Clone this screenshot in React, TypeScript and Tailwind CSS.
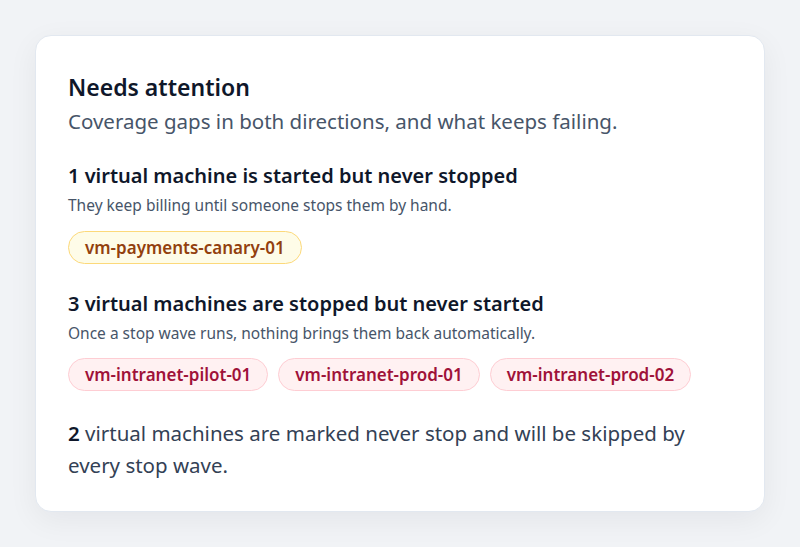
const started = ['vm-payments-canary-01']
const stopped = ['vm-intranet-pilot-01', 'vm-intranet-prod-01', 'vm-intranet-prod-02']

function Chip({ name, tone }: { name: string; tone: 'amber' | 'rose' }) {
  const cls =
    tone === 'amber'
      ? 'bg-[#fefce8] border-[#fcd97a] text-[#92400e]'
      : 'bg-[#fff1f2] border-[#fecdd3] text-[#9f1239]'
  return (
    <span className={`inline-flex items-center h-[33px] px-4 rounded-full border text-[17px] font-semibold ${cls}`}>
      {name}
    </span>
  )
}

export default function App() {
  return (
    <div
      className="min-h-[547px] bg-[#f1f3f6] p-[35px] text-[#0f172a]"
      style={{ fontFamily: '"Noto Sans", "Open Sans", sans-serif' }}
    >
      {/* Card */}
      <div className="bg-white rounded-2xl border border-[#e2e8f0] shadow-[0_8px_30px_rgba(15,23,42,0.06)] px-8 pt-[36px] pb-[30px]">
        <h2 className="text-[23px] font-semibold leading-[30px]">Needs attention</h2>
        <p className="text-[20.5px] text-[#475569] leading-[30px] mt-[4px]">
          Coverage gaps in both directions, and what keeps failing.
        </p>

        <section className="mt-[26px]">
          <h3 className="text-[20px] font-semibold leading-7">1 virtual machine is started but never stopped</h3>
          <p className="text-[15.5px] text-[#475569] leading-6 mt-[3px]">
            They keep billing until someone stops them by hand.
          </p>
          <div className="flex flex-wrap gap-[10px] mt-[14px]">
            {started.map((n) => (
              <Chip key={n} name={n} tone="amber" />
            ))}
          </div>
        </section>

        <section className="mt-[26px]">
          <h3 className="text-[20px] font-semibold leading-7">3 virtual machines are stopped but never started</h3>
          <p className="text-[15.5px] text-[#475569] leading-6 mt-[3px]">
            Once a stop wave runs, nothing brings them back automatically.
          </p>
          <div className="flex flex-wrap gap-[10px] mt-[13px]">
            {stopped.map((n) => (
              <Chip key={n} name={n} tone="rose" />
            ))}
          </div>
        </section>

        <p className="text-[20.5px] text-[#334155] leading-8 mt-[26px]">
          <span className="font-semibold text-[#0f172a]">2</span> virtual machines are marked never stop and will be
          skipped by every stop wave.
        </p>
      </div>
    </div>
  )
}
